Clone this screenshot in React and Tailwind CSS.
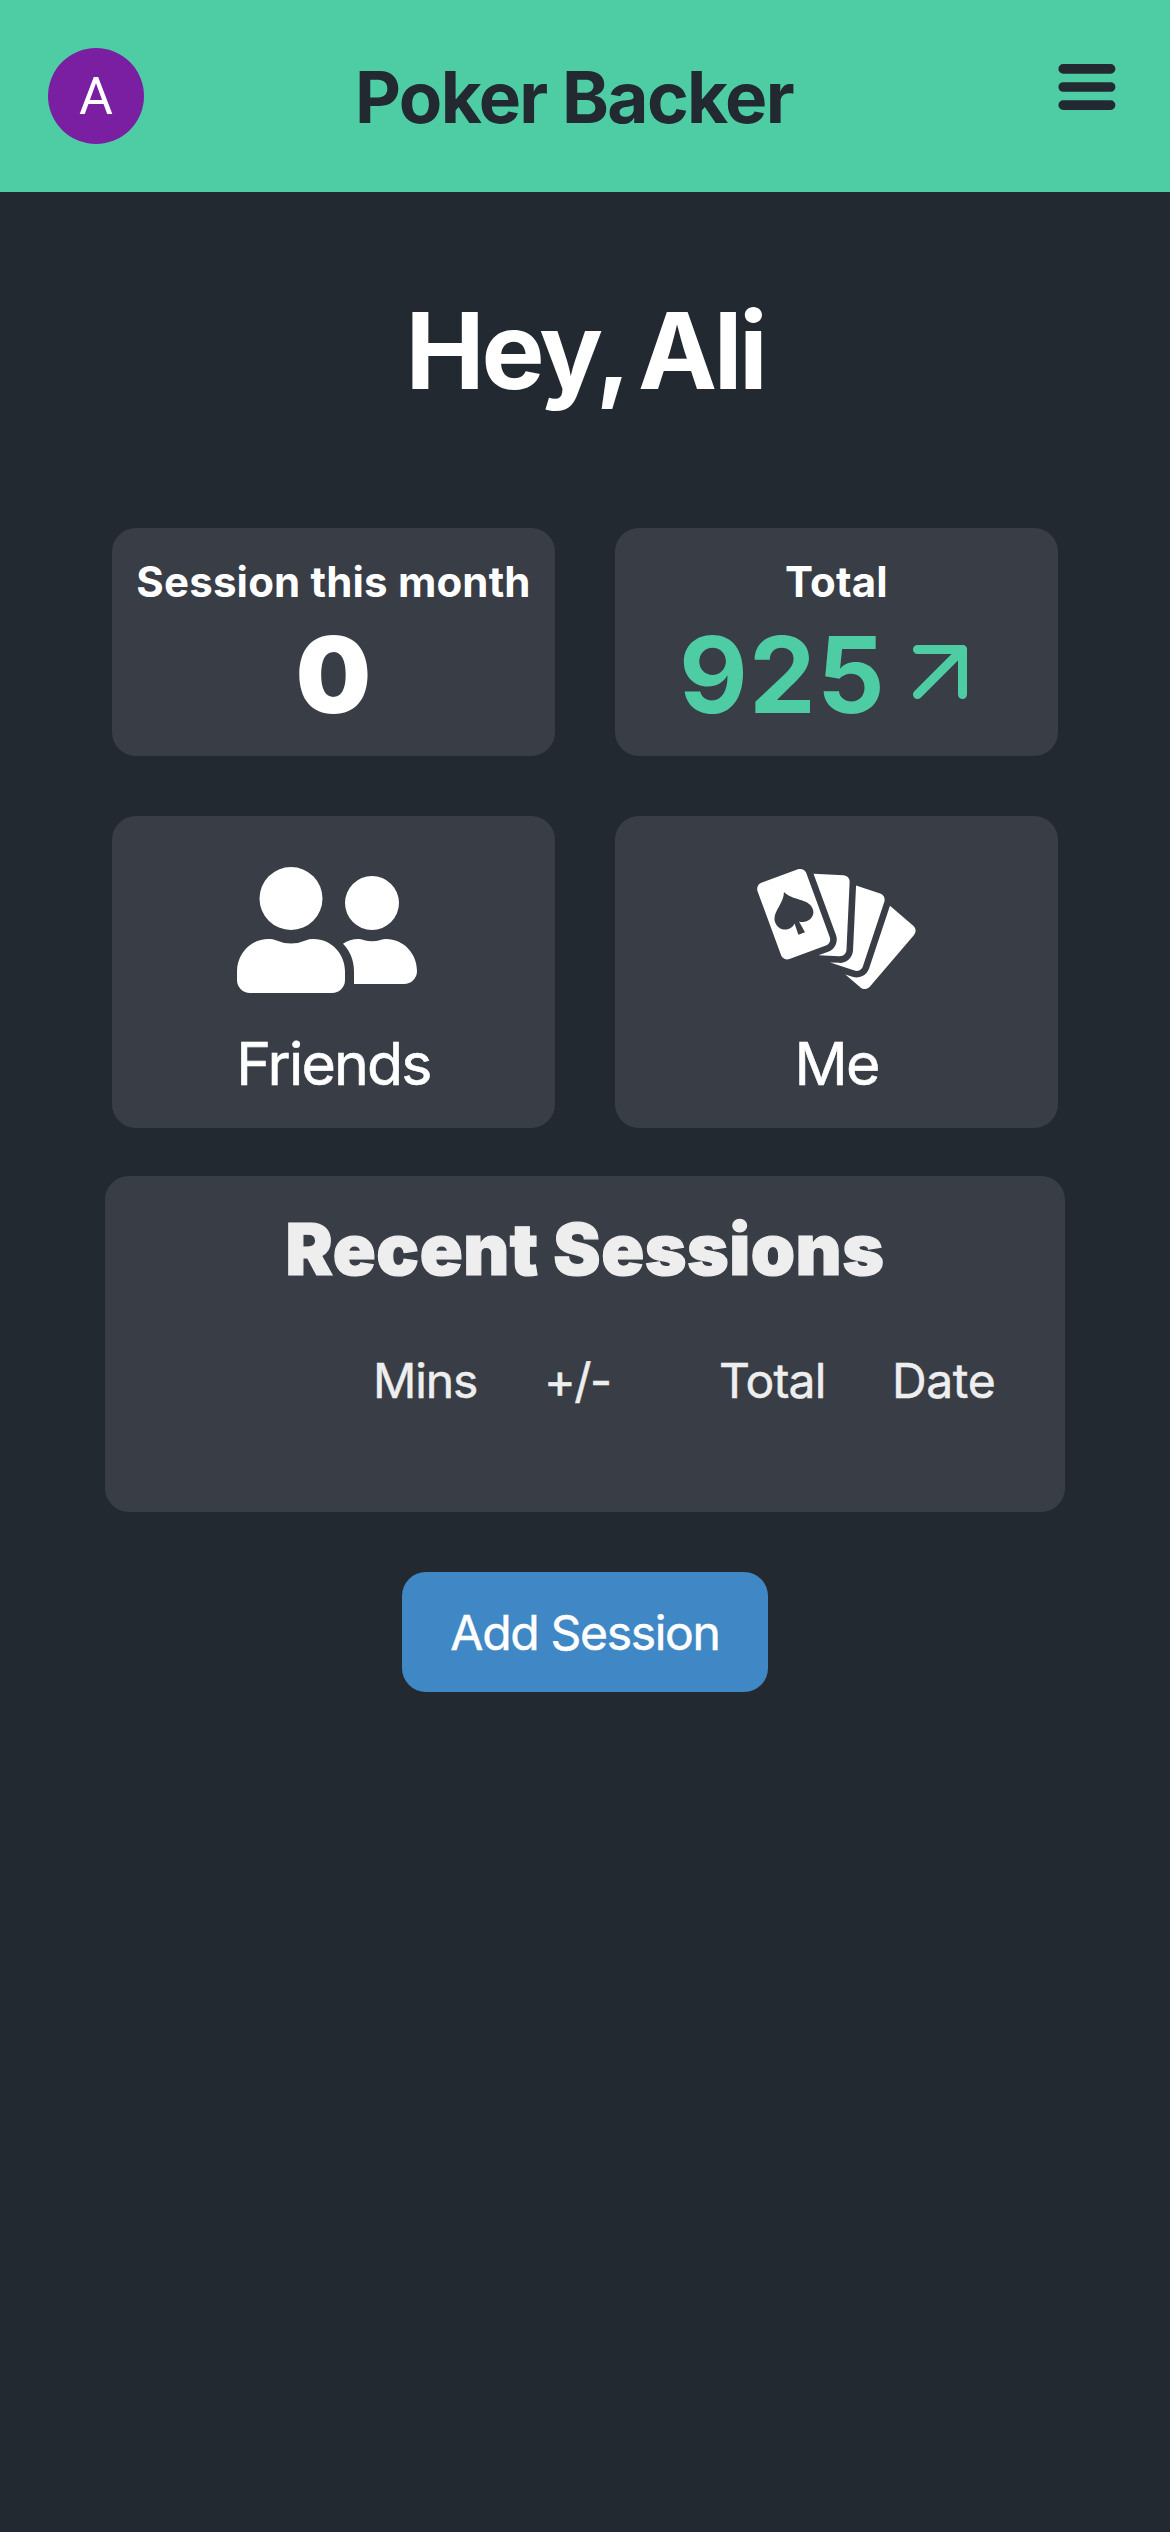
import { ArrowUpRight } from "lucide-react";
import { GiPokerHand } from "react-icons/gi";

function MenuIcon() {
  return (
    <svg width="58" height="46" viewBox="0 0 58 46" stroke="currentColor" strokeWidth="9.6" strokeLinecap="round">
      <path d="M5.2 4.9H52.6M5.2 23H52.6M5.2 41.1H52.6" />
    </svg>
  );
}

function FriendsIcon() {
  return (
    <svg width="193" height="126" viewBox="0 0 193 126" fill="currentColor">
      <circle cx="54" cy="31.5" r="31.5" />
      <circle cx="135" cy="36" r="27" />
      <path d="M31.5 72Q35.500 71.700 38 73Q54 80 70 73Q72.500 71.700 76.500 72C94.500 72 108 87 108 104.500V113A13 13 0 0 1 95 126H13A13 13 0 0 1 0 113V104.500C0 87 13.500 72 31.500 72Z" />
      <path d="M106 76.800Q112.500 72 121.500 72Q124 72 126.500 73Q135 75.500 143.500 73Q146 72 149 72C166.500 72 180 86.500 180 104A13 13 0 0 1 167 117H117V104C117 94 113 83.500 106 76.800Z" />
    </svg>
  );
}

function StatCard({ label, children }) {
  return (
    <div className="flex h-[228px] flex-col items-center rounded-3xl bg-[#393e46] pt-6">
      <h2 className="text-[42px] leading-[60px] font-bold tracking-[0.18px] whitespace-nowrap">{label}</h2>
      {children}
    </div>
  );
}

function LinkCard({ label, children }) {
  return (
    <button className="flex h-[312px] flex-col items-center rounded-3xl bg-[#393e46] pt-6">
      <span className="flex h-[180px] items-center">{children}</span>
      <span className="text-[59px] leading-[87px] tracking-[-1.8px] [-webkit-text-stroke:0.6px_currentColor]">{label}</span>
    </button>
  );
}

export default function App() {
  return (
    <div className="min-h-[2532px] bg-[#232931] font-['Inter',sans-serif] text-white">
      <header className="flex h-48 items-center bg-[#4ecca3] px-12 text-[#232931]">
        <div className="flex size-24 items-center justify-center rounded-full bg-[#7b1fa2] pt-0.5 font-['Roboto',sans-serif] text-[52px] leading-none text-white">
          A
        </div>
        <h1 className="flex-1 pt-0.5 pr-0.5 text-center text-[71px] leading-[96px] font-bold tracking-[-1.6px]">Poker Backer</h1>
        <button className="flex w-[116px] justify-end pr-[6px] pb-[18px]">
          <MenuIcon />
        </button>
      </header>

      <main className="flex flex-col items-center pt-[94px]">
        <h1 className="text-[106px] leading-[129px] font-bold tracking-[-3.4px] [word-spacing:-8px]">Hey, Ali</h1>

        <section className="mt-[113px] grid grid-cols-[443px_443px] gap-[60px]">
          <StatCard label="Session this month">
            <p className="text-[106px] leading-[126px] font-black">0</p>
          </StatCard>
          <StatCard label="Total">
            <div className="flex h-[124px] items-center text-[#4ecca3]">
              <p className="pt-0.5 text-[106px] leading-[124px] font-bold tracking-[1.2px]">925</p>
              <ArrowUpRight size={108} strokeWidth={2} className="mb-1" />
            </div>
          </StatCard>
          <LinkCard label="Friends">
            <FriendsIcon />
          </LinkCard>
          <LinkCard label="Me">
            <GiPokerHand size={180} />
          </LinkCard>
        </section>

        <section className="mt-12 h-[336px] w-[960px] rounded-3xl bg-[#393e46] pt-6 text-[#eeeeee]">
          <h2 className="text-center text-[71px] leading-[98px] font-black tracking-[0.5px] [-webkit-text-stroke:1.2px_currentColor]">
            Recent Sessions
          </h2>
          <div className="mt-[47px] grid grid-cols-[268px_171px_175px_172px_1fr] text-[48px] leading-[72px] [-webkit-text-stroke:0.5px_currentColor]">
            <span />
            <span className="tracking-[-1.1px]">Mins</span>
            <span className="tracking-[-1.5px]">+/-</span>
            <span className="tracking-[-0.8px]">Total</span>
            <span className="pl-px tracking-[-0.4px]">Date</span>
          </div>
        </section>

        <button className="mt-[60px] h-[120px] w-[366px] rounded-3xl bg-[#3f88c5] pt-0.5 text-[48px] leading-[72px] tracking-[-1.3px] [-webkit-text-stroke:0.5px_currentColor]">
          Add Session
        </button>
      </main>
    </div>
  );
}
